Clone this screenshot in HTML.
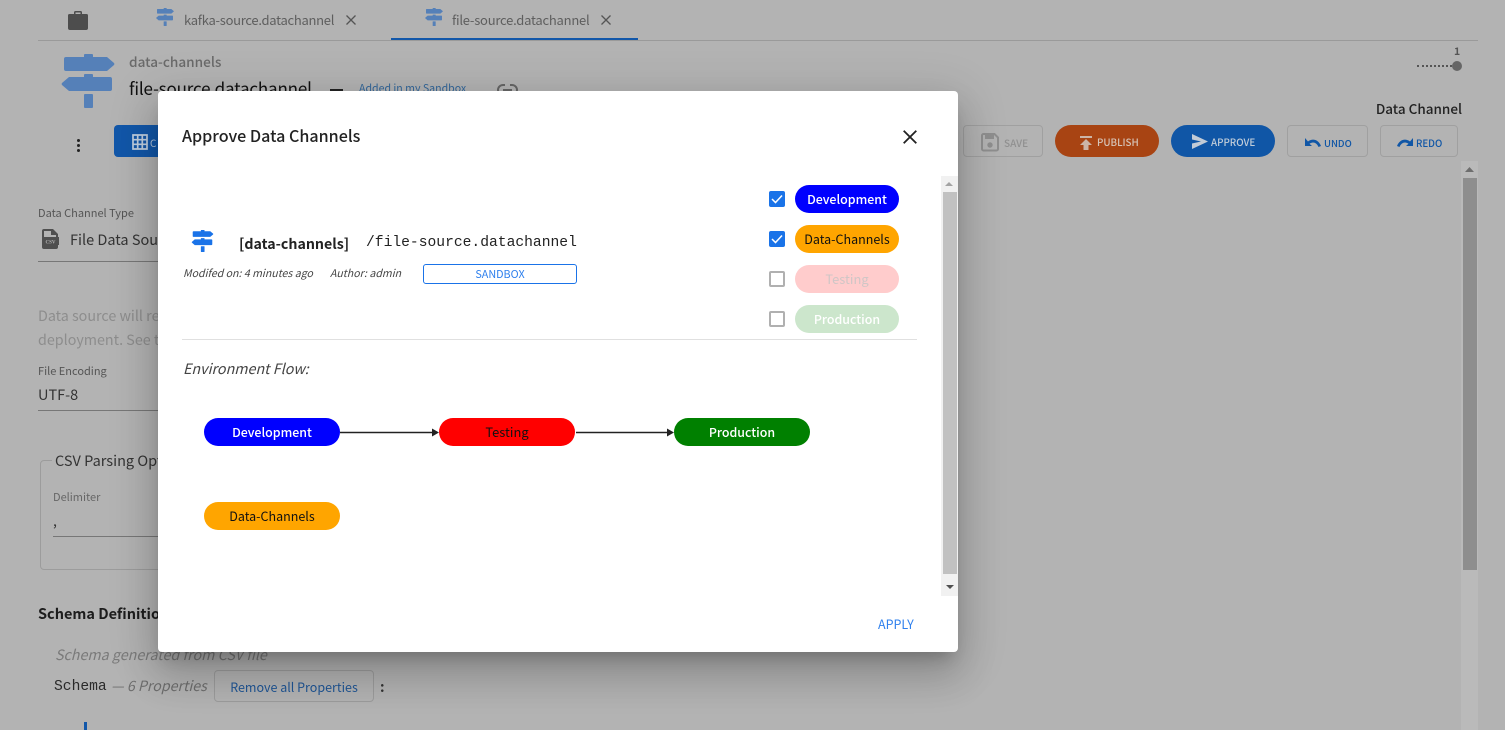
<!DOCTYPE html>
<html><head><meta charset="utf-8">
<style>
html,body{margin:0;padding:0;width:1505px;height:730px;overflow:hidden;background:#b3b3b3}
body{position:relative;font-family:"Noto Sans CJK JP","Liberation Sans",sans-serif;color:#1c1c1c}
.t{position:absolute;white-space:nowrap;line-height:20px;height:20px}
.a{position:absolute}
.m{font-family:"Liberation Mono",monospace}
.btn{position:absolute;box-sizing:border-box;border:1px solid #a0a0a0;border-radius:4px;top:125px;height:32px}
.pill{position:absolute;border-radius:14px;height:28px;line-height:28px;text-align:center;font-size:12.5px}
.b{font-weight:500;font-size:12.4px}
.cb{position:absolute;left:769px;width:16px;height:16px;box-sizing:border-box;border-radius:2px}
.on{background:#1a73e8}
.off{border:2px solid #b0b0b0;background:#fff}
svg{position:absolute;overflow:visible}
</style></head><body>
<svg width="0" height="0" style="position:absolute"><defs>
<symbol id="sign" viewBox="0 0 54 54"><path d="M24 0h7a1 1 0 0 1 1 1v2h14l7 6a1.500 1.500 0 0 1 0 2l-7 6H5a2 2 0 0 1-2-2V5a2 2 0 0 1 2-2h18V1a1 1 0 0 1 1-1zM24 20h7a1 1 0 0 1 1 1v2h17a2 2 0 0 1 2 2v10a2 2 0 0 1-2 2H8l-7-6a1.500 1.500 0 0 1 0-2l7-6h15v-2a1 1 0 0 1 1-1zM24 40h7a1 1 0 0 1 1 1v12a1 1 0 0 1-1 1h-7a1 1 0 0 1-1-1V41a1 1 0 0 1 1-1z"/></symbol>
</defs></svg>

<!-- header tabs -->
<svg style="left:68px;top:10px" width="20" height="20" viewBox="0 0 20 20"><path fill="#4d4d4d" d="M6 4V2.500A1.500 1.500 0 0 1 7.500 1h5A1.500 1.500 0 0 1 14 2.500V4h4.500A1.500 1.500 0 0 1 20 5.500V18a2 2 0 0 1-2 2H2a2 2 0 0 1-2-2V5.500A1.500 1.500 0 0 1 1.500 4zm1.500 0h5V2.500h-5z" fill-rule="evenodd"/></svg>
<svg style="left:156px;top:8px;fill:#5580b8" width="18" height="18"><use href="#sign" width="18" height="18"/></svg>
<div class="t" style="left:184px;top:10px;font-size:13px;letter-spacing:-.28px;color:#5e5e5e">kafka-source.datachannel</div>
<svg style="left:346px;top:15px" width="10" height="10"><path d="M0.500 0.500L9.500 9.500M9.500 0.500L0.500 9.500" stroke="#555" stroke-width="1.300"/></svg>
<svg style="left:425px;top:8px;fill:#5580b8" width="18" height="18"><use href="#sign" width="18" height="18"/></svg>
<div class="t" style="left:452px;top:10px;font-size:13px;letter-spacing:-.23px;color:#5e5e5e">file-source.datachannel</div>
<svg style="left:601px;top:15px" width="10" height="10"><path d="M0.500 0.500L9.500 9.500M9.500 0.500L0.500 9.500" stroke="#555" stroke-width="1.300"/></svg>
<div class="a" style="left:38px;top:40px;width:1440px;height:1px;background:#9a9a9a"></div>
<div class="a" style="left:391px;top:38px;width:247px;height:2px;background:#1257a9"></div>

<!-- title -->
<svg style="left:61px;top:54px;fill:#5580b8" width="54" height="54"><use href="#sign" width="54" height="54"/></svg>
<div class="t" style="left:129px;top:51px;font-size:13.600px;font-weight:500;color:#6a6a6a">data-channels</div>
<div class="t" style="left:129px;top:78px;font-size:17px;letter-spacing:-.17px;color:#111">file-source.datachannel</div>
<div class="a" style="left:330px;top:89px;width:13px;height:2px;background:#222"></div>
<div class="t" style="left:359px;top:79px;font-size:10.600px;color:#33679a">Added in my Sandbox</div>
<svg style="left:497px;top:84px" width="21" height="8"><path d="M8 1H6a5 5 0 0 0 0 10M13 1h2a5 5 0 0 1 0 10M6 6h9" fill="none" stroke="#666" stroke-width="2"/></svg>

<!-- version -->
<div class="t" style="left:1454px;top:42px;font-size:10.500px;font-weight:700;color:#555">1</div>
<div class="a" style="left:1417px;top:65px;width:35px;border-top:2px dotted #555"></div>
<div class="a" style="left:1452px;top:61px;width:10px;height:10px;border-radius:50%;background:#666"></div>
<div class="t" style="right:43px;top:98px;font-size:13.500px;font-weight:500;color:#222">Data Channel</div>

<!-- toolbar -->
<div class="a" style="left:77px;top:139px;width:3px;height:3px;border-radius:50%;background:#222;box-shadow:0 5px 0 #222,0 10px 0 #222"></div>
<div class="a" style="left:114px;top:125px;width:60px;height:32px;border-radius:4px;background:#1257a9"></div>
<svg style="left:132px;top:134px" width="16" height="16"><path d="M1 1h14v14H1zM5.700 1v14M10.300 1v14M1 5.700h14M1 10.300h14" fill="none" stroke="#c0cfe0" stroke-width="1.700"/></svg>
<div class="t" style="left:150px;top:133px;font-size:10px;color:#b3c6dd">C</div>

<div class="btn" style="left:963px;width:80px"></div>
<svg style="left:981px;top:133px" width="18" height="19"><path fill="none" stroke="#8f8f8f" stroke-width="2" d="M2.500 1h11l3.500 3.500V16a1.500 1.500 0 0 1-1.500 1.500h-13A1.500 1.500 0 0 1 1 16V2.500A1.500 1.500 0 0 1 2.500 1z"/><path fill="#8f8f8f" d="M4 2h9v4H4z"/><circle cx="9" cy="12" r="2.700" fill="#8f8f8f"/></svg>
<div class="t" style="left:1004px;top:133px;font-size:10px;font-weight:500;color:#909090">SAVE</div>

<div class="a" style="left:1055px;top:125px;width:104px;height:32px;border-radius:16px;background:#a84413"></div>
<svg style="left:1080px;top:136px" width="12" height="14"><path fill="#ccb5a7" d="M0 0h12v2H0zM6 3l6 6H8.500v5h-5V9H0z"/></svg>
<div class="t" style="left:1097px;top:132px;font-size:9.800px;font-weight:500;color:#d6c4b8">PUBLISH</div>

<div class="a" style="left:1171px;top:125px;width:104px;height:32px;border-radius:16px;background:#1056a6"></div>
<svg style="left:1192px;top:134px" width="16" height="15"><path fill="#c2cbd6" d="M0 0l16 7.500L0 15v-5.500L9 7.500 0 5.500z"/></svg>
<div class="t" style="left:1211px;top:132px;font-size:9.800px;font-weight:500;color:#c2cdd9">APPROVE</div>

<div class="btn" style="left:1287px;width:81px"></div>
<svg style="left:1305px;top:138px" width="16" height="10"><path fill="#1056a6" d="M0 0v8h7L4.500 5.700C7.500 3.500 11.500 4 13.500 9L16 8C13.500 1.500 7.500 0 3 3.500z"/></svg>
<div class="t" style="left:1324px;top:133px;font-size:9.500px;font-weight:500;color:#1056a6">UNDO</div>
<div class="btn" style="left:1380px;width:78px"></div>
<svg style="left:1397px;top:138px" width="16" height="10"><path fill="#1056a6" d="M16 0v8H9l2.500-2.300C8.500 3.500 4.500 4 2.500 9L0 8C2.500 1.500 8.500 0 13 3.500z"/></svg>
<div class="t" style="left:1416px;top:133px;font-size:9.700px;font-weight:500;color:#1056a6">REDO</div>

<!-- page scrollbar -->
<div class="a" style="left:1461px;top:161px;width:17px;height:569px;background:#bababa"></div>
<div class="a" style="left:1463px;top:178px;width:14px;height:392px;background:#8e8e8e"></div>
<svg style="left:1465px;top:167px" width="9" height="5"><path d="M0 5L4.500 0 9 5z" fill="#6e6e6e"/></svg>

<!-- form -->
<div class="t" style="left:38px;top:203px;font-size:11px;color:#555">Data Channel Type</div>
<svg style="left:42px;top:229px" width="17" height="20"><path fill-rule="evenodd" fill="#4f4f4f" d="M2 0h9l5 5v3h1v8h-1v2a2 2 0 0 1-2 2H2a2 2 0 0 1-2-2v-2h0V8h0V2a2 2 0 0 1 2-2zM2 2v6h12V6H9V2z"/><text x="8.500" y="14.500" font-size="5" font-weight="700" text-anchor="middle" fill="#b3b3b3" font-family="Liberation Serif,serif">CSV</text></svg>
<div class="t" style="left:70px;top:230px;font-size:14.500px;color:#333">File Data Source</div>
<div class="a" style="left:38px;top:261px;width:125px;height:1px;background:#777"></div>
<div class="t" style="left:38px;top:306px;font-size:14.300px;color:#8d8d8d">Data source will read</div>
<div class="t" style="left:38px;top:330px;font-size:14.300px;color:#8d8d8d">deployment. See the</div>
<div class="t" style="left:38px;top:361px;font-size:11px;color:#555">File Encoding</div>
<div class="t" style="left:38px;top:385px;font-size:14.500px;color:#333">UTF-8</div>
<div class="a" style="left:38px;top:410px;width:125px;height:1px;background:#777"></div>

<div class="a" style="left:40px;top:460px;width:130px;height:110px;box-sizing:border-box;border:1px solid #9c9c9c;border-radius:4px"></div>
<div class="t" style="left:52px;top:451px;padding:0 3px;background:#b3b3b3;font-size:14.500px;color:#333">CSV Parsing Options</div>
<div class="t" style="left:53px;top:487px;font-size:11px;color:#666">Delimiter</div>
<div class="t" style="left:53px;top:511px;font-size:14px;color:#333">,</div>
<div class="a" style="left:53px;top:536px;width:110px;height:1px;background:#777"></div>

<div class="t" style="left:38px;top:604px;font-size:14.500px;font-weight:700;color:#1d1d1d">Schema Definition</div>
<div class="t" style="left:55px;top:645px;font-size:14.300px;font-style:italic;color:#7a7a7a">Schema generated from CSV file</div>
<div class="t m" style="left:54px;top:677px;font-size:14.650px;color:#2a2a2a">Schema</div>
<div class="t" style="left:111px;top:676px;font-size:14.200px;font-style:italic;color:#6e6e6e">— 6 Properties</div>
<div class="a" style="left:214px;top:670px;width:160px;height:32px;box-sizing:border-box;border:1px solid #9c9c9c;border-radius:4px;text-align:center;line-height:32px;font-size:12.500px;color:#1f5595">Remove all Properties</div>
<div class="t" style="left:380px;top:677px;font-size:14px;font-weight:700;color:#333">:</div>
<div class="a" style="left:84px;top:722px;width:3px;height:8px;background:#1257a9"></div>

<!-- dialog -->
<div class="a" style="left:158px;top:91px;width:800px;height:561px;background:#fff;border-radius:4px;box-shadow:0 11px 15px -7px rgba(0,0,0,.2),0 24px 38px 3px rgba(0,0,0,.14),0 9px 46px 8px rgba(0,0,0,.12)"></div>
<div class="t" style="left:182px;top:125px;font-size:16.100px;font-weight:500;color:#222">Approve Data Channels</div>
<svg style="left:903px;top:130px" width="14" height="14"><path d="M0.700 0.700L13.300 13.300M13.300 0.700L0.700 13.300" stroke="#222" stroke-width="1.800"/></svg>

<svg style="left:191px;top:230px;fill:#1a73e8" width="23" height="22"><use href="#sign" width="23" height="22"/></svg>
<div class="t" style="left:239px;top:234px;font-size:14.200px;font-weight:700;color:#222">[data-channels]</div>
<div class="t m" style="left:366px;top:233px;font-size:14.650px;color:#222">/file-source.datachannel</div>
<div class="t" style="left:183px;top:264px;font-size:10.600px;font-style:italic;color:#444">Modifed on: 4 minutes ago</div>
<div class="t" style="left:330px;top:264px;font-size:10.600px;font-style:italic;color:#444">Author: admin</div>
<div class="a" style="left:423px;top:264px;width:154px;height:20px;box-sizing:border-box;border:1px solid #1a73e8;border-radius:3px;text-align:center;line-height:19px;font-size:10.800px;color:#2f80ed">SANDBOX</div>

<div class="cb on" style="top:191px"></div>
<svg style="left:771px;top:194px" width="12" height="10"><path d="M1 5l3.500 3.500L11 1.500" fill="none" stroke="#fff" stroke-width="1.500"/></svg>
<div class="cb on" style="top:231px"></div>
<svg style="left:771px;top:234px" width="12" height="10"><path d="M1 5l3.500 3.500L11 1.500" fill="none" stroke="#fff" stroke-width="1.500"/></svg>
<div class="cb off" style="top:271px"></div>
<div class="cb off" style="top:311px"></div>

<div class="pill b" style="left:795px;top:185px;width:104px;background:#00f;color:#fff">Development</div>
<div class="pill" style="left:795px;top:225px;width:104px;background:#ffa500;color:#111">Data-Channels</div>
<div class="pill" style="left:795px;top:265px;width:104px;background:#fcc;color:#cfc6c6;font-size:12.900px">Testing</div>
<div class="pill b" style="left:795px;top:305px;width:104px;background:#cce6cc;color:#fff">Production</div>

<div class="a" style="left:182px;top:339px;width:735px;height:1px;background:#e0e0e0"></div>
<div class="t" style="left:183px;top:359px;font-size:14.300px;font-style:italic;color:#444">Environment Flow:</div>

<svg style="left:340px;top:426px" width="340" height="14"><path d="M0 6.500H93M236 6.500H328" stroke="#222" stroke-width="1.500" fill="none"/><path d="M92 2.500L99 6.500 92 10.500zM327 2.500L334 6.500 327 10.500z" fill="#222"/></svg>
<div class="pill b" style="left:204px;top:418px;width:136px;background:#00f;color:#fff">Development</div>
<div class="pill" style="left:439px;top:418px;width:136px;background:#f00;color:#111;font-size:12.900px">Testing</div>
<div class="pill b" style="left:674px;top:418px;width:136px;background:#008000;color:#fff">Production</div>
<div class="pill" style="left:204px;top:502px;width:136px;background:#ffa500;color:#111">Data-Channels</div>

<!-- dialog scrollbar -->
<div class="a" style="left:941px;top:176px;width:17px;height:420px;background:#f1f1f1"></div>
<div class="a" style="left:943px;top:192px;width:14px;height:382px;background:#c1c1c1"></div>
<svg style="left:945px;top:182px" width="8" height="4"><path d="M0 4L4 0 8 4z" fill="#a3a3a3"/></svg>
<svg style="left:946px;top:585px" width="8" height="4"><path d="M0 0L4 4 8 0z" fill="#505050"/></svg>

<div class="t" style="left:878px;top:614px;font-size:12.500px;color:#2f80ed">APPLY</div>
</body></html>
